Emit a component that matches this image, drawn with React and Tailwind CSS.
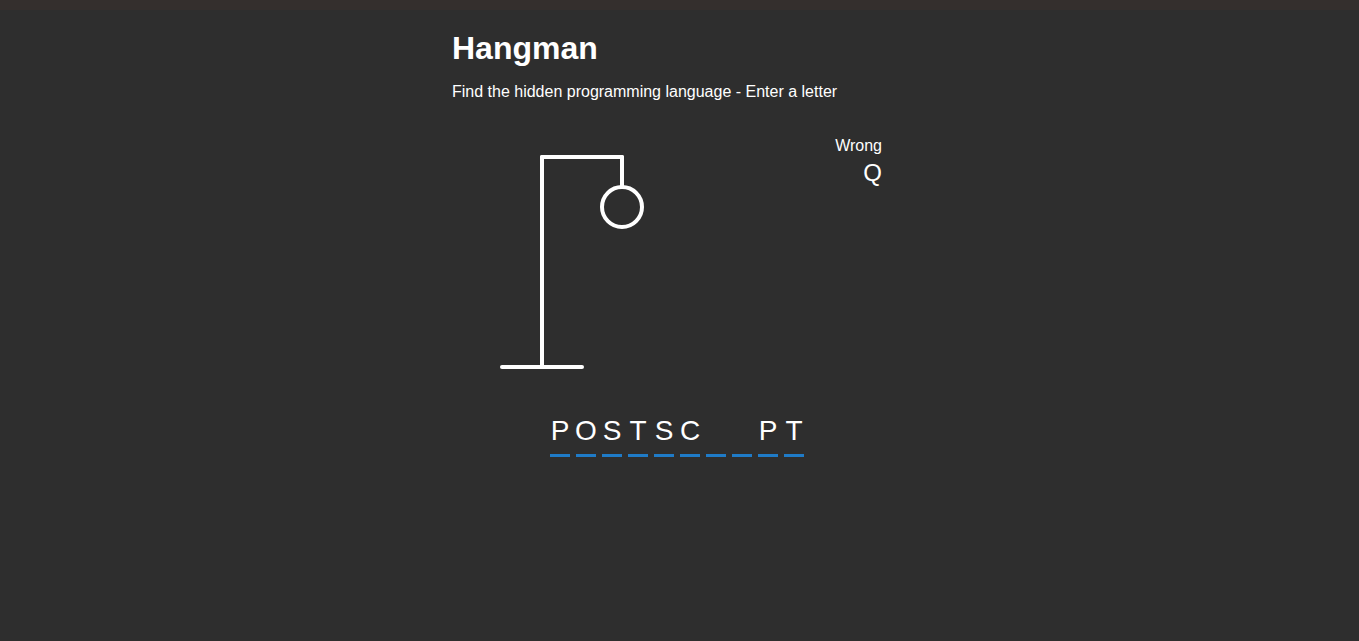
import React from 'react';

const word = ['P', 'O', 'S', 'T', 'S', 'C', '', '', 'P', 'T'];

const Figure = () => (
  <svg
    width="200"
    height="250"
    className="ml-[30px] shrink-0"
    fill="transparent"
    stroke="#fff"
    strokeWidth="4"
    strokeLinecap="round"
  >
    {/* gallows */}
    <line x1="60" y1="20" x2="140" y2="20" />
    <line x1="140" y1="20" x2="140" y2="50" />
    <line x1="60" y1="20" x2="60" y2="230" />
    <line x1="20" y1="230" x2="100" y2="230" />
    {/* head */}
    <circle cx="140" cy="70" r="20" />
  </svg>
);

export default function App() {
  return (
    <div className="min-h-[641px] bg-[#2e2e2e] text-white font-['Liberation_Sans',Arial,sans-serif]">
      <div className="h-[10px] bg-[#342f2d]" />
      <div className="w-[455px] mx-auto pt-[20px]">
        <h1 className="text-[32px] leading-[37px] font-bold">Hangman</h1>
        <p className="mt-[16px] text-[16px] leading-[18px]">
          Find the hidden programming language - Enter a letter
        </p>

        <div className="mt-[36px] flex pr-[25px]">
          <Figure />
          <div className="flex-1 flex flex-col items-end">
            <span className="text-[16px] leading-[18px]">Wrong</span>
            <span className="mt-[4px] text-[24px] leading-[28px]">Q</span>
          </div>
        </div>

        <div className="mt-[20px] flex justify-center pr-[5px]">
          {word.map((ch, i) => (
            <span
              key={i}
              className="mx-[3px] h-[50px] w-[20px] inline-flex items-center justify-center border-b-[3px] border-[#1f7bc7] text-[28px] leading-[32px] font-light"
            >
              {ch}
            </span>
          ))}
        </div>
      </div>
    </div>
  );
}
